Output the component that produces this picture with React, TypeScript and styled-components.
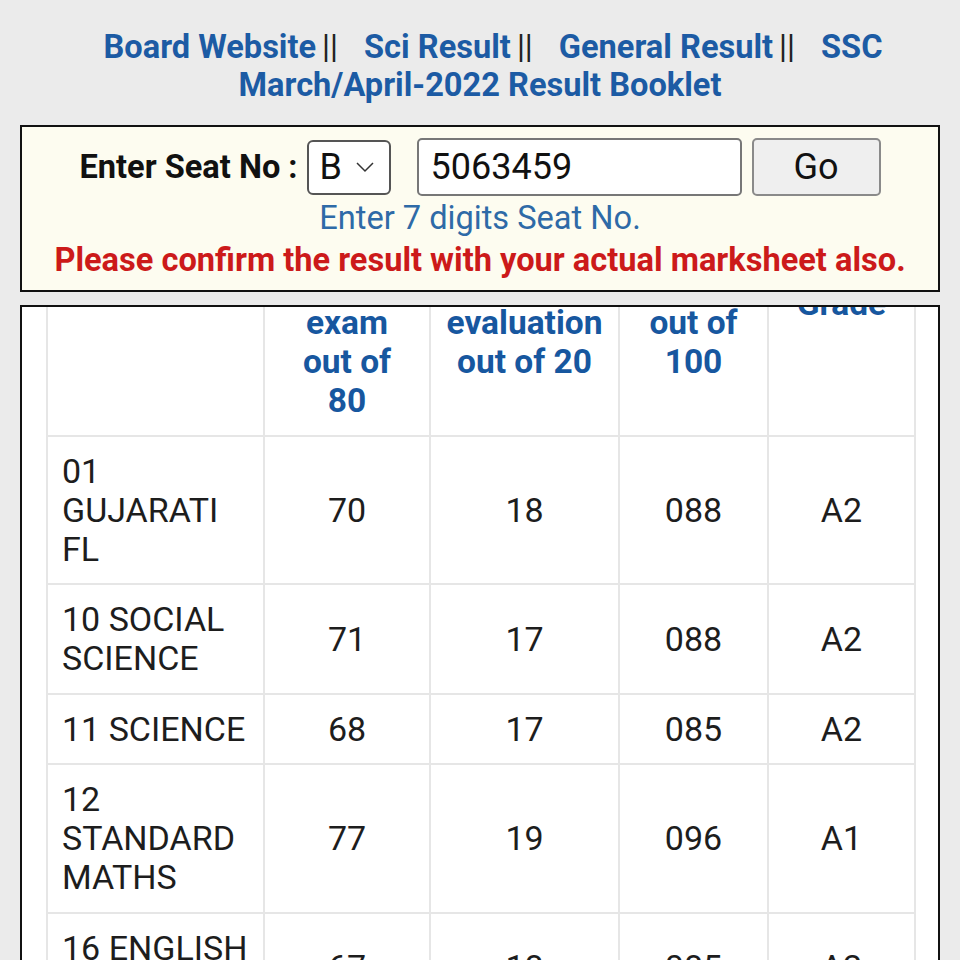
import React from 'react'
import styled, { createGlobalStyle } from 'styled-components'

// ------------------------------------------------ data
interface IMarkRow {
  subject: string
  theory: string
  internal: string
  total: string
  grade: string
}

const rows: IMarkRow[] = [
  { subject: '01 GUJARATI FL', theory: '70', internal: '18', total: '088', grade: 'A2' },
  { subject: '10 SOCIAL SCIENCE', theory: '71', internal: '17', total: '088', grade: 'A2' },
  { subject: '11 SCIENCE', theory: '68', internal: '17', total: '085', grade: 'A2' },
  { subject: '12 STANDARD MATHS', theory: '77', internal: '19', total: '096', grade: 'A1' },
  { subject: '16 ENGLISH (SL)', theory: '67', internal: '18', total: '085', grade: 'A2' }
]

const colWidths = [217, 166, 189, 149, 147]

// ------------------------------------------------ style
const GlobalStyle = createGlobalStyle`
  html, body {
    margin: 0;
    padding: 0;
    background: #ebebeb;
    font-family: Roboto, 'Liberation Sans', Arial, sans-serif;
  }
`
const Page = styled.div`
  height: 960px;
  overflow: hidden;
  display: flex;
  flex-direction: column;
`
const LinkBar = styled.div`
  padding: 28px 50px 0;
  text-align: center;
  font-size: 32.6px;
  line-height: 38px;
  font-weight: 700;
`
const TopLink = styled.a<{ $first?: boolean }>`
  color: #1c5ba4;
  text-decoration: none;
  margin-left: ${(p) => (p.$first ? '26px' : '0')};
`
const Sep = styled.span`
  color: #222;
  font-weight: 400;
  margin: 0 26px 0 6px;
`
const SearchPanel = styled.div`
  margin: 21px 20px 0;
  border: 2px solid #111;
  background: #fdfcf0;
  padding: 11px 0 12px;
  display: flex;
  flex-direction: column;
  align-items: center;
`
const SeatRow = styled.div`
  display: flex;
  align-items: center;
`
const Label = styled.label`
  font-size: 32.6px;
  font-weight: 700;
  color: #111;
  margin-right: 9px;
`
const SelectBox = styled.div`
  width: 84px;
  height: 55px;
  box-sizing: border-box;
  border: 2px solid #555;
  border-radius: 6px;
  background: #fff;
  display: flex;
  align-items: center;
  padding-left: 11px;
  gap: 13px;
  font-size: 36px;
  color: #111;
  margin-right: 26px;
`
const SeatInput = styled.div`
  width: 325px;
  height: 58px;
  box-sizing: border-box;
  border: 2px solid #777;
  border-radius: 5px;
  background: #fff;
  display: flex;
  align-items: center;
  padding-left: 12px;
  font-size: 36px;
  color: #111;
  margin-right: 10px;
`
const GoButton = styled.button`
  width: 129px;
  height: 58px;
  box-sizing: border-box;
  border: 2px solid #8a8a8a;
  border-radius: 5px;
  background: #efefef;
  font-family: inherit;
  font-size: 36px;
  color: #111;
`
const Hint = styled.div`
  margin-top: 4px;
  font-size: 32.6px;
  line-height: 36px;
  color: #2e6aa7;
`
const Warning = styled.div`
  margin-top: 6px;
  font-size: 32.6px;
  line-height: 36px;
  font-weight: 700;
  color: #cc1a1a;
`
const ResultPanel = styled.div`
  margin: 13px 20px 0;
  flex: 1;
  border: 2px solid #111;
  border-bottom: none;
  background: #fff;
  overflow: hidden;
  padding: 0 24px;
`
const MarksTable = styled.table`
  margin-top: -136px;
  width: 868px;
  table-layout: fixed;
  border-collapse: collapse;
  font-size: 34px;
  line-height: 38.7px;
  color: #1d1d1d;
`
const HeadCell = styled.th`
  border: 2px solid #e6e6e6;
  padding: 15px 6px;
  color: #17579f;
  font-weight: 700;
  font-size: 33.5px;
  text-align: center;
  vertical-align: middle;
`
const Cell = styled.td<{ $left?: boolean }>`
  border: 2px solid #e6e6e6;
  padding: 15px 14px;
  font-weight: 400;
  text-align: ${(p) => (p.$left ? 'left' : 'center')};
  vertical-align: middle;
`

// ------------------------------------------------ comp
const Chevron: React.FC = () => (
  <svg width="20" height="12" viewBox="0 0 20 12">
    <path d="M2 2 L10 10 L18 2" fill="none" stroke="#333" strokeWidth="1.5" />
  </svg>
)

export default function App() {
  return (
    <Page>
      <GlobalStyle />
      <LinkBar>
        <TopLink $first>Board Website</TopLink>
        <Sep>||</Sep>
        <TopLink>Sci Result</TopLink>
        <Sep>||</Sep>
        <TopLink>General Result</TopLink>
        <Sep>||</Sep>
        <TopLink>SSC March/April-2022 Result Booklet</TopLink>
      </LinkBar>

      <SearchPanel>
        <SeatRow>
          <Label>Enter Seat No :</Label>
          <SelectBox>
            B
            <Chevron />
          </SelectBox>
          <SeatInput>5063459</SeatInput>
          <GoButton>Go</GoButton>
        </SeatRow>
        <Hint>Enter 7 digits Seat No.</Hint>
        <Warning>Please confirm the result with your actual marksheet also.</Warning>
      </SearchPanel>

      <ResultPanel>
        <MarksTable>
          <colgroup>
            {colWidths.map((w, i) => (
              <col key={i} style={{ width: w }} />
            ))}
          </colgroup>
          <thead>
            <tr>
              <HeadCell />
              <HeadCell>
                Marks
                <br />
                obtained
                <br />
                in Board
                <br />
                exam
                <br />
                out of
                <br />
                80
              </HeadCell>
              <HeadCell>
                Marks of
                <br />
                Internal
                <br />
                evaluation
                <br />
                out of 20
              </HeadCell>
              <HeadCell>
                Total
                <br />
                Marks
                <br />
                out of
                <br />
                100
              </HeadCell>
              <HeadCell>Grade</HeadCell>
            </tr>
          </thead>
          <tbody>
            {rows.map((r) => (
              <tr key={r.subject}>
                <Cell $left>{r.subject}</Cell>
                <Cell>{r.theory}</Cell>
                <Cell>{r.internal}</Cell>
                <Cell>{r.total}</Cell>
                <Cell>{r.grade}</Cell>
              </tr>
            ))}
          </tbody>
        </MarksTable>
      </ResultPanel>
    </Page>
  )
}
